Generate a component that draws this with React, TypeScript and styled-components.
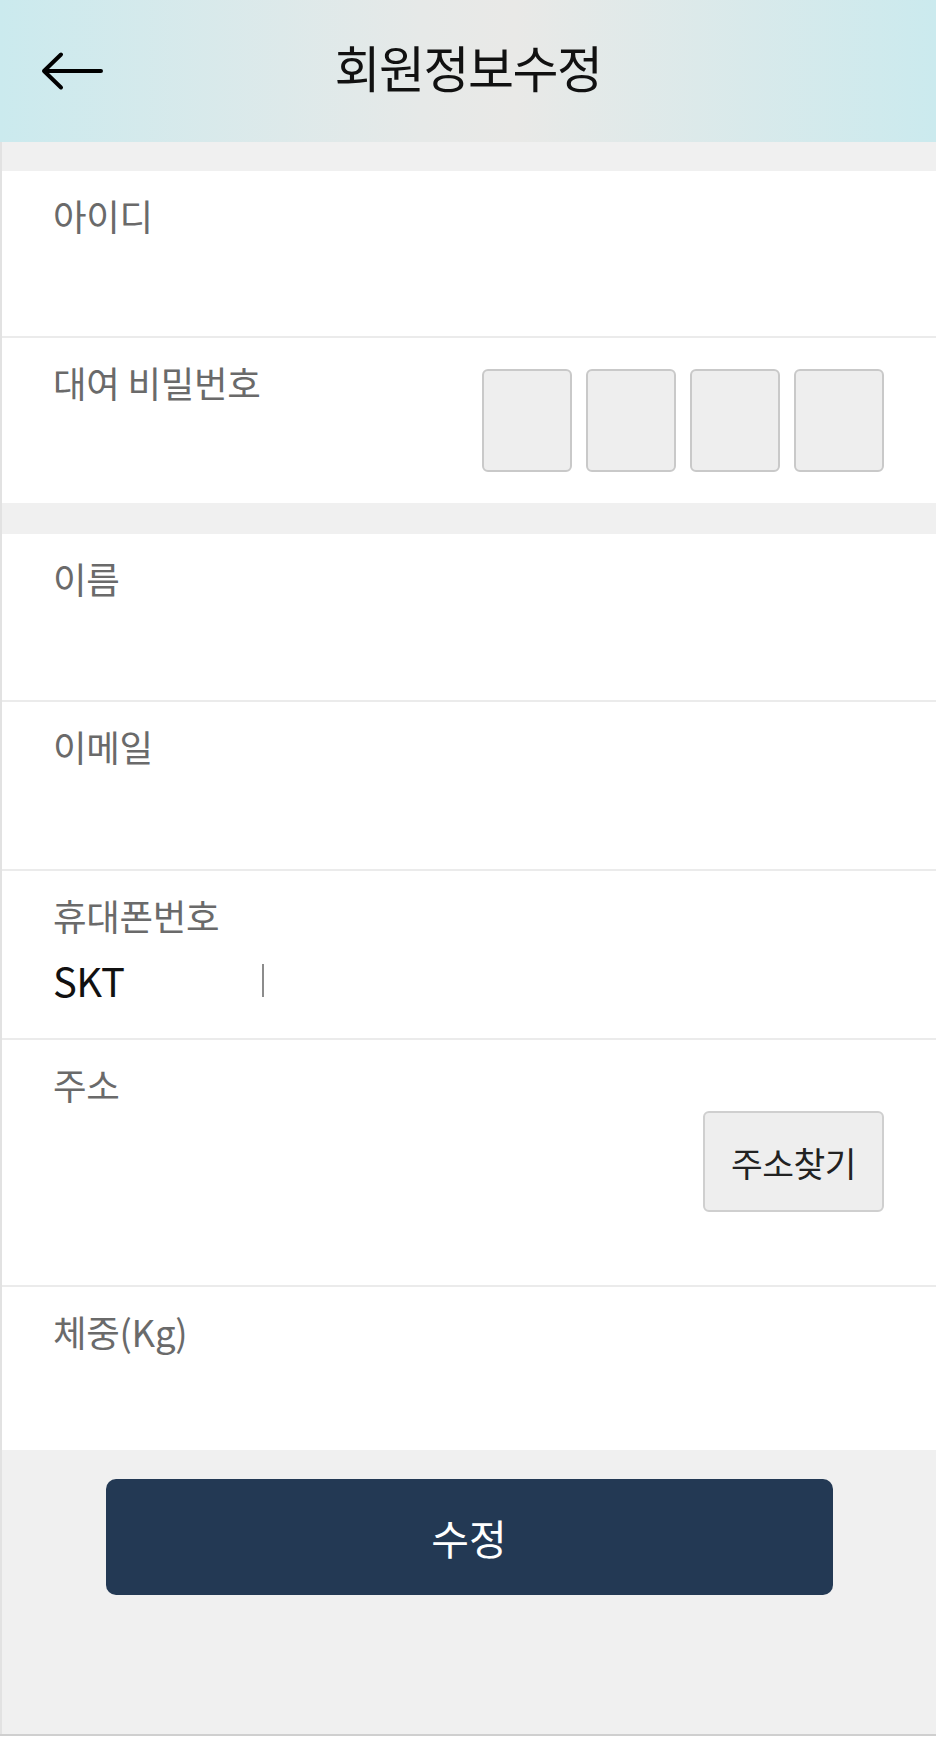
import React from "react";
import styled, { createGlobalStyle } from "styled-components";

const GlobalStyle = createGlobalStyle`
  html, body {
    margin: 0;
    padding: 0;
    background: #ffffff;
  }
  body {
    font-family: "Noto Sans CJK KR", "Noto Sans", sans-serif;
  }
  * { box-sizing: border-box; }
`;

const Page = styled.div`
  width: 936px;
  display: flex;
  flex-direction: column;
  border-bottom: 2px solid #cfcfcf;
`;

const Header = styled.header`
  height: 142px;
  display: grid;
  grid-template-columns: 1fr auto 1fr;
  align-items: center;
  background: linear-gradient(90deg, #cbeaee 0%, #e6e9e8 45%, #e9e9e7 55%, #cbeaee 100%);
`;

const BackButton = styled.button`
  justify-self: start;
  margin-left: 40px;
  padding: 0;
  border: 0;
  background: transparent;
  display: flex;
  align-items: center;
  cursor: pointer;
`;

const Title = styled.h1`
  margin: 0 0 10px;
  font-size: 50px;
  font-weight: 400;
  line-height: 1;
  color: #111111;
  letter-spacing: -1.5px;
`;

const Gap = styled.div<{ $h: number }>`
  height: ${(p) => p.$h}px;
  background: #f0f0f0;
  border-left: 2px solid #e2e2e2;
`;

const Section = styled.section`
  background: #ffffff;
  border-left: 2px solid #e2e2e2;
  display: flex;
  flex-direction: column;
`;

const Row = styled.div<{ $h: number; $last?: boolean }>`
  min-height: ${(p) => p.$h}px;
  padding: 22px 52px 0 51px;
  border-bottom: ${(p) => (p.$last ? "0" : "2px solid #ebebeb")};
  display: flex;
  flex-direction: column;
`;

const PinRow = styled.div`
  padding: 22px 52px 31px 51px;
  display: flex;
  justify-content: space-between;
  align-items: flex-start;
`;

const Label = styled.div`
  font-size: 36.5px;
  line-height: 46px;
  color: #6a6a6a;
  letter-spacing: -0.3px;
`;

const PinBoxes = styled.div`
  margin-top: 9px;
  display: flex;
  gap: 14px;
`;

const PinBox = styled.div`
  width: 90px;
  height: 103px;
  background: #eeeeee;
  border: 2px solid #c9c9c9;
  border-radius: 6px;
`;

const PhoneLine = styled.div`
  margin-top: 15px;
  display: flex;
  align-items: center;
`;

const Carrier = styled.div`
  width: 209px;
  font-size: 40px;
  line-height: 52px;
  color: #111111;
  letter-spacing: -0.5px;
`;

const Divider = styled.div`
  width: 2px;
  height: 33px;
  background: #8c8c8c;
`;

const AddressButton = styled.button`
  align-self: flex-end;
  margin-top: 3px;
  margin-bottom: 73px;
  width: 181px;
  height: 101px;
  border: 2px solid #cfcfcf;
  border-radius: 6px;
  background: #eeeeee;
  font-family: "Noto Sans CJK KR", sans-serif;
  font-size: 34.5px;
  letter-spacing: -0.5px;
  color: #222222;
  padding: 0;
`;

const Footer = styled.div`
  height: 284px;
  background: #f0f0f0;
  border-left: 2px solid #e2e2e2;
  display: flex;
  justify-content: center;
  align-items: flex-start;
  padding-top: 29px;
`;

const SubmitButton = styled.button`
  width: 727px;
  height: 116px;
  border: 0;
  border-radius: 10px;
  background: #233954;
  color: #ffffff;
  font-family: "Noto Sans CJK KR", sans-serif;
  font-size: 41px;
  padding: 0;
`;

const BackIcon = () => (
  <svg width="64" height="40" viewBox="0 0 64 40" fill="none">
    <path
      d="M4 20 H61 M21 3.5 L4 20 L21 36.5"
      stroke="#000"
      strokeWidth="4"
      strokeLinecap="round"
      strokeLinejoin="round"
    />
  </svg>
);

export default function App() {
  return (
    <>
      <GlobalStyle />
      <Page>
        <Header>
          <BackButton aria-label="back">
            <BackIcon />
          </BackButton>
          <Title>회원정보수정</Title>
          <div />
        </Header>
        <Gap $h={29} />
        <Section>
          <Row $h={167}>
            <Label>아이디</Label>
          </Row>
          <PinRow>
            <Label>대여 비밀번호</Label>
            <PinBoxes>
              <PinBox />
              <PinBox />
              <PinBox />
              <PinBox />
            </PinBoxes>
          </PinRow>
        </Section>
        <Gap $h={31} />
        <Section>
          <Row $h={168}>
            <Label>이름</Label>
          </Row>
          <Row $h={169}>
            <Label>이메일</Label>
          </Row>
          <Row $h={169}>
            <Label>휴대폰번호</Label>
            <PhoneLine>
              <Carrier>SKT</Carrier>
              <Divider />
            </PhoneLine>
          </Row>
          <Row $h={247}>
            <Label>주소</Label>
            <AddressButton>주소찾기</AddressButton>
          </Row>
          <Row $h={163} $last>
            <Label>체중(Kg)</Label>
          </Row>
        </Section>
        <Footer>
          <SubmitButton>수정</SubmitButton>
        </Footer>
      </Page>
    </>
  );
}
